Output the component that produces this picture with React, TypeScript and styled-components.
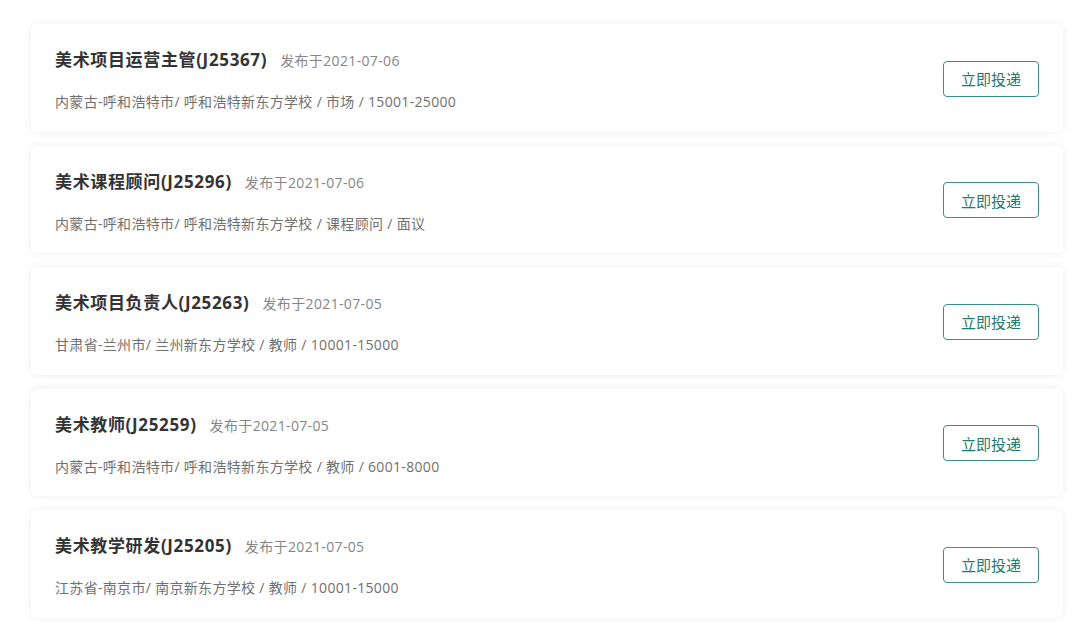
import React from "react";
import styled, { createGlobalStyle } from "styled-components";

const GlobalStyle = createGlobalStyle`
  body {
    margin: 0;
    background: #ffffff;
    font-family: "Open Sans", "Noto Sans CJK SC", sans-serif;
  }
`;

const List = styled.div`
  display: flex;
  flex-direction: column;
  gap: 14px;
  padding: 24px 17px 10px 31px;
`;

const Card = styled.div`
  display: flex;
  align-items: center;
  justify-content: space-between;
  height: 107.5px;
  box-sizing: border-box;
  padding: 1px 24px 0;
  background: #fff;
  border-radius: 6px;
  box-shadow: 0 0 10px rgba(0, 0, 0, 0.07);
`;

const Info = styled.div`
  align-self: flex-start;
  display: flex;
  flex-direction: column;
  gap: 20px;
  padding-top: 23px;
`;

const TitleRow = styled.div`
  display: flex;
  align-items: baseline;
  gap: 13px;
`;

const Title = styled.span`
  font-size: 17px;
  font-weight: 700;
  color: #333;
  line-height: 24px;
  letter-spacing: 0.65px;
`;

const Posted = styled.span`
  font-size: 14px;
  color: #858585;
  letter-spacing: 0.35px;
`;

const Meta = styled.div`
  font-size: 14px;
  line-height: 20px;
  color: #707070;
  letter-spacing: 0.32px;
`;

const ApplyButton = styled.button`
  width: 96px;
  height: 36px;
  margin-top: 1px;
  border: 1px solid #3b8f87;
  border-radius: 4px;
  background: #fff;
  color: #1f7a72;
  font-family: "Noto Sans CJK SC", sans-serif;
  font-size: 15px;
  cursor: pointer;
`;

const jobs = [
  { title: "美术项目运营主管(J25367)", date: "2021-07-06", meta: "内蒙古-呼和浩特市/ 呼和浩特新东方学校 / 市场 / 15001-25000" },
  { title: "美术课程顾问(J25296)", date: "2021-07-06", meta: "内蒙古-呼和浩特市/ 呼和浩特新东方学校 / 课程顾问 / 面议" },
  { title: "美术项目负责人(J25263)", date: "2021-07-05", meta: "甘肃省-兰州市/ 兰州新东方学校 / 教师 / 10001-15000" },
  { title: "美术教师(J25259)", date: "2021-07-05", meta: "内蒙古-呼和浩特市/ 呼和浩特新东方学校 / 教师 / 6001-8000" },
  { title: "美术教学研发(J25205)", date: "2021-07-05", meta: "江苏省-南京市/ 南京新东方学校 / 教师 / 10001-15000" },
];

export default function App() {
  return (
    <>
      <GlobalStyle />
      <List>
        {jobs.map((job) => (
          <Card key={job.title}>
            <Info>
              <TitleRow>
                <Title>{job.title}</Title>
                <Posted>发布于{job.date}</Posted>
              </TitleRow>
              <Meta>{job.meta}</Meta>
            </Info>
            <ApplyButton>立即投递</ApplyButton>
          </Card>
        ))}
      </List>
    </>
  );
}
